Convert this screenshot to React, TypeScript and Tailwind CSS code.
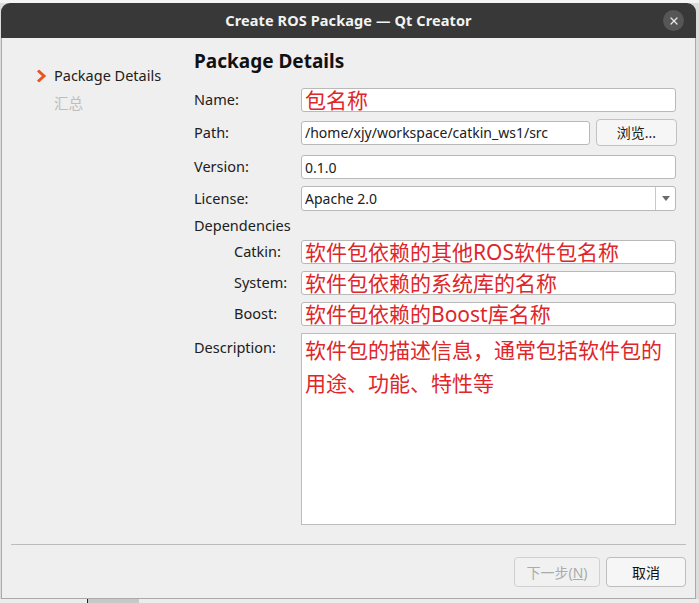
import { X } from 'lucide-react';

const font = { fontFamily: '"Noto Sans", "Noto Sans CJK SC", sans-serif' };

function Field({ children, className = '' }: { children?: React.ReactNode; className?: string }) {
  return (
    <div
      className={`flex items-center bg-white border border-[#b9b9b9] rounded-[3px] px-[3px] text-[14px] text-[#202020] ${className}`}
    >
      {children}
    </div>
  );
}

function Red({ children }: { children: React.ReactNode }) {
  return <span className="text-[21px] leading-none text-[#e0262b] whitespace-nowrap">{children}</span>;
}

function Row({ label, indent, top, children }: { label: string; indent?: boolean; top: string; children: React.ReactNode }) {
  return (
    <div className={`flex items-center ${top}`}>
      <div className={`w-[107px] shrink-0 text-[14.5px] text-[#202020] ${indent ? 'pl-[40px]' : ''}`}>{label}</div>
      <div className="flex-1 flex">{children}</div>
    </div>
  );
}

export default function App() {
  return (
    <div className="w-[699px] h-[603px] bg-[#dcdcdc] overflow-hidden flex flex-col" style={font}>
      <div className="h-[3px] bg-[#f4f4f4]" />
      <div className="w-[695px] ml-[1px] flex flex-col">
        <div className="h-[35px] bg-[#383838] rounded-t-[9px] flex items-center justify-center relative">
          <span className="text-[14.5px] font-bold text-[#f2f2f2] tracking-[0.1px]">Create ROS Package — Qt Creator</span>
          <div className="absolute right-[12px] top-[7px] w-[21px] h-[21px] rounded-full bg-[#565656] flex items-center justify-center">
            <X className="w-[12px] h-[12px] text-[#e8e8e8]" strokeWidth={2.5} />
          </div>
        </div>
        <div className="h-[561px] bg-[#efefef] border-x border-b border-[#a9a9a9] flex flex-col">
          <div className="flex h-[492px]">
            <div className="w-[192px] shrink-0 pl-[33px] pt-[28px] text-[14.5px]">
              <div className="flex items-center h-[20px]">
                <svg width="12" height="14" viewBox="0 0 12 14">
                  <path d="M3 1.5 L9 7 L3 12.5" fill="none" stroke="#e95420" strokeWidth="3" strokeLinejoin="miter" />
                </svg>
                <span className="ml-[7px] text-[#202020]">Package Details</span>
              </div>
              <div className="h-[20px] mt-[7px] pl-[19px] text-[#bdbdbd]">汇总</div>
            </div>
            <div className="w-[482px] flex flex-col">
              <div className="mt-[11px] h-[24px] text-[19px] font-bold leading-[24px] text-[#111]">Package Details</div>
              <Row label="Name:" top="mt-[15px]">
                <Field className="h-[24px] w-full"><Red>包名称</Red></Field>
              </Row>
              <Row label="Path:" top="mt-[7px]">
                <div className="flex items-center w-full h-[27px]">
                  <Field className="h-[24px] w-[289px]">/home/xjy/workspace/catkin_ws1/src</Field>
                  <div className="ml-[6px] w-[81px] h-[27px] rounded-[4px] border border-[#c2c2c2] bg-[#f6f6f6] flex items-center justify-center text-[14px] text-[#202020]">
                    浏览...
                  </div>
                </div>
              </Row>
              <Row label="Version:" top="mt-[9px]">
                <Field className="h-[24px] w-full">0.1.0</Field>
              </Row>
              <Row label="License:" top="mt-[7px]">
                <div className="h-[25px] w-full flex bg-white border border-[#b9b9b9] rounded-[3px]">
                  <div className="flex-1 flex items-center px-[3px] text-[14px] text-[#202020]">Apache 2.0</div>
                  <div className="w-[20px] border-l border-[#c8c8c8] flex items-center justify-center">
                    <svg width="8" height="5" viewBox="0 0 8 5"><path d="M0 0h8L4 5z" fill="#6b6b6b" /></svg>
                  </div>
                </div>
              </Row>
              <div className="mt-[4px] h-[20px] text-[14.5px] text-[#202020] leading-[20px]">Dependencies</div>
              <Row label="Catkin:" indent top="mt-[5px]">
                <Field className="h-[24px] w-full"><Red>软件包依赖的其他ROS软件包名称</Red></Field>
              </Row>
              <Row label="System:" indent top="mt-[7px]">
                <Field className="h-[24px] w-full"><Red>软件包依赖的系统库的名称</Red></Field>
              </Row>
              <Row label="Boost:" indent top="mt-[7px]">
                <Field className="h-[24px] w-full"><Red>软件包依赖的Boost库名称</Red></Field>
              </Row>
              <div className="flex mt-[7px]">
                <div className="w-[107px] shrink-0 text-[14.5px] text-[#202020] pt-[4px]">Description:</div>
                <div className="flex-1 h-[192px] bg-white border border-[#bdbdbd] px-[3px] text-[21px] leading-[33px] text-[#e0262b]">
                  软件包的描述信息，通常包括软件包的用途、功能、特性等
                </div>
              </div>
            </div>
          </div>
          <div className="mx-[9px] mt-[14px] h-px bg-[#bcbcbc]" />
          <div className="flex justify-end mt-[12px] pr-[9px] gap-[6px]">
            <div className="w-[86px] h-[30px] rounded-[4px] border border-[#d0d0d0] bg-[#f1f1f1] flex items-center justify-center text-[14px] text-[#ababab]">
              下一步(<span className="underline">N</span>)
            </div>
            <div className="w-[80px] h-[30px] rounded-[4px] border border-[#bdbdbd] bg-[#f6f6f6] flex items-center justify-center text-[14px] text-[#111]">
              取消
            </div>
          </div>
        </div>
      </div>
      <div className="flex h-[4px]">
        <div className="w-[87px] bg-[#ececec]" />
        <div className="w-px bg-[#222]" />
        <div className="w-[51px] bg-[#c8c8c8]" />
        <div className="flex-1 bg-[#ececec]" />
      </div>
    </div>
  );
}
